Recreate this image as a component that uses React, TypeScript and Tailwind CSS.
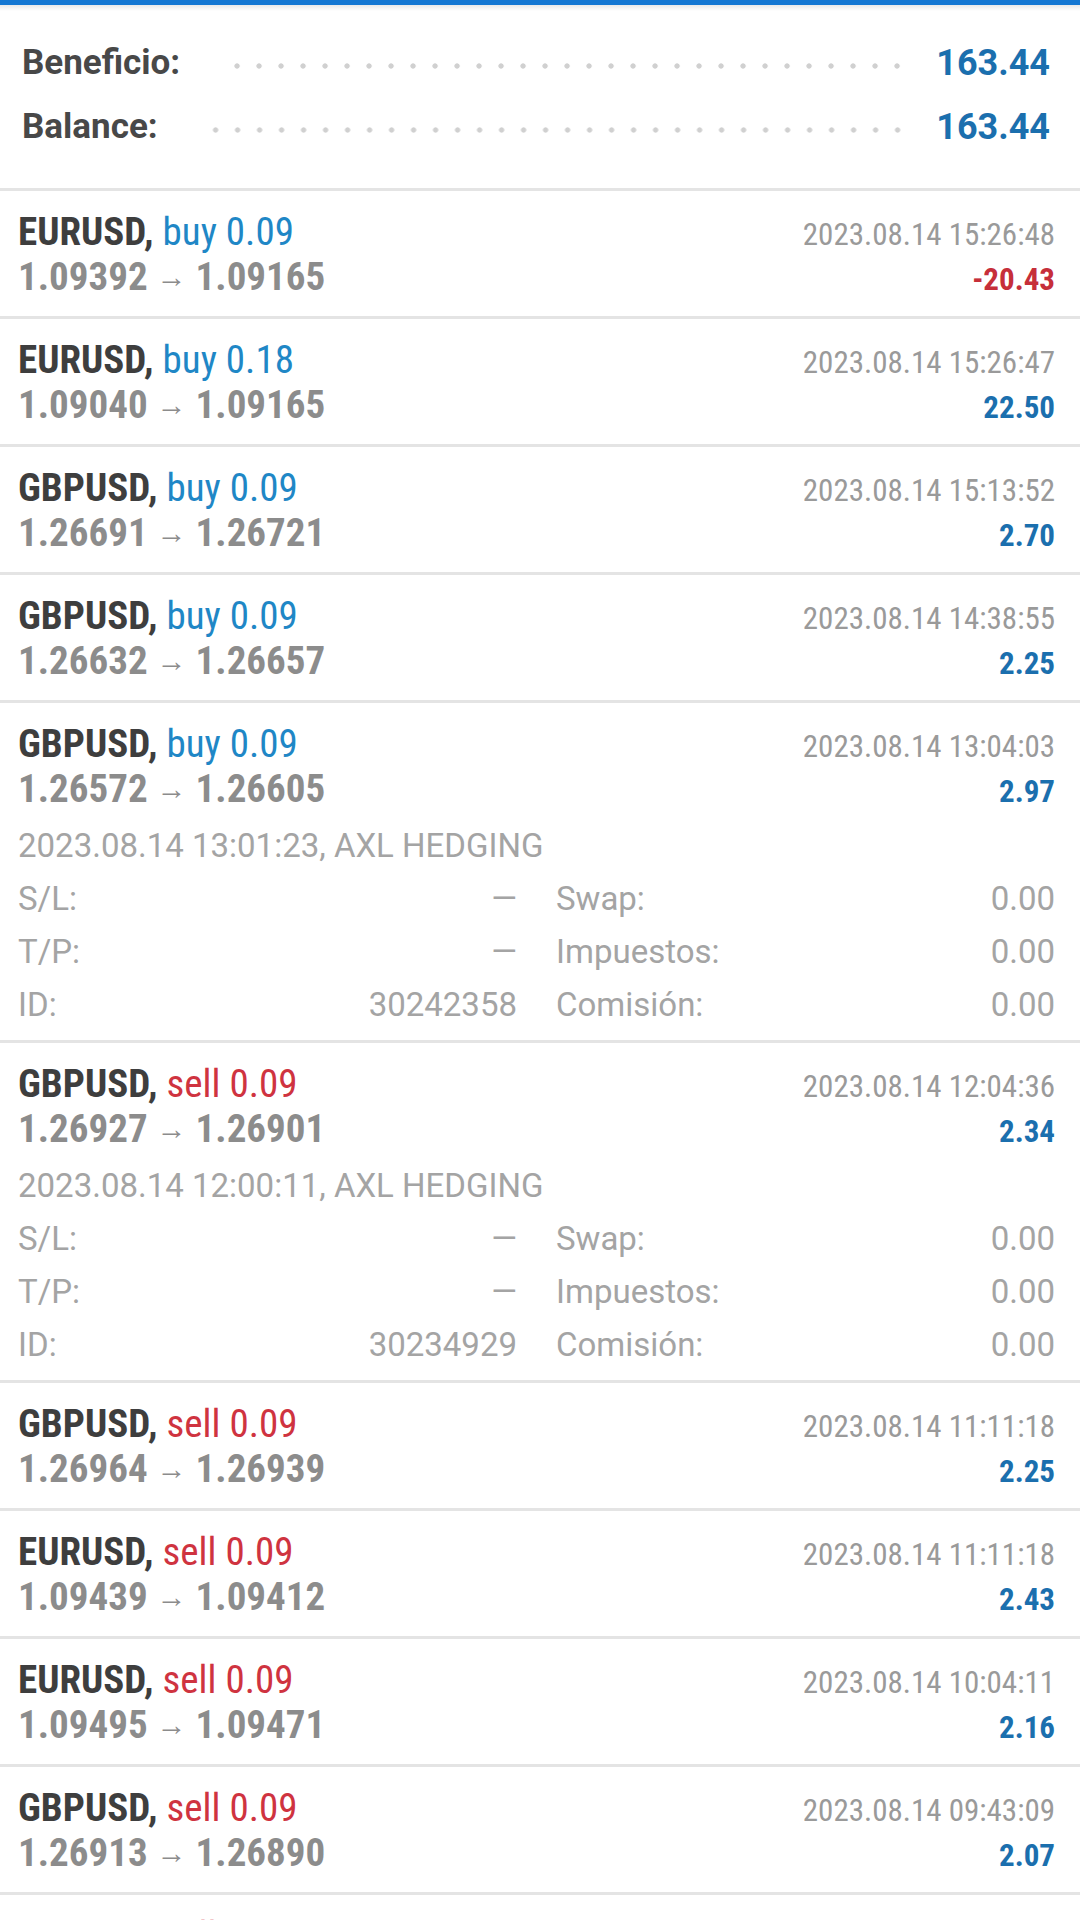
import React from "react"

type Trade = {
  sym: string
  side: "buy" | "sell"
  vol: string
  open: string
  close: string
  time: string
  profit: string
  details?: { opened: string; id: string }
}

const trades: Trade[] = [
  { sym: "EURUSD", side: "buy", vol: "0.09", open: "1.09392", close: "1.09165", time: "2023.08.14 15:26:48", profit: "-20.43" },
  { sym: "EURUSD", side: "buy", vol: "0.18", open: "1.09040", close: "1.09165", time: "2023.08.14 15:26:47", profit: "22.50" },
  { sym: "GBPUSD", side: "buy", vol: "0.09", open: "1.26691", close: "1.26721", time: "2023.08.14 15:13:52", profit: "2.70" },
  { sym: "GBPUSD", side: "buy", vol: "0.09", open: "1.26632", close: "1.26657", time: "2023.08.14 14:38:55", profit: "2.25" },
  {
    sym: "GBPUSD", side: "buy", vol: "0.09", open: "1.26572", close: "1.26605", time: "2023.08.14 13:04:03", profit: "2.97",
    details: { opened: "2023.08.14 13:01:23, AXL HEDGING", id: "30242358" },
  },
  {
    sym: "GBPUSD", side: "sell", vol: "0.09", open: "1.26927", close: "1.26901", time: "2023.08.14 12:04:36", profit: "2.34",
    details: { opened: "2023.08.14 12:00:11, AXL HEDGING", id: "30234929" },
  },
  { sym: "GBPUSD", side: "sell", vol: "0.09", open: "1.26964", close: "1.26939", time: "2023.08.14 11:11:18", profit: "2.25" },
  { sym: "EURUSD", side: "sell", vol: "0.09", open: "1.09439", close: "1.09412", time: "2023.08.14 11:11:18", profit: "2.43" },
  { sym: "EURUSD", side: "sell", vol: "0.09", open: "1.09495", close: "1.09471", time: "2023.08.14 10:04:11", profit: "2.16" },
  { sym: "GBPUSD", side: "sell", vol: "0.09", open: "1.26913", close: "1.26890", time: "2023.08.14 09:43:09", profit: "2.07" },
  { sym: "EURUSD", side: "sell", vol: "0.09", open: "1.09512", close: "1.09488", time: "2023.08.14 09:21:40", profit: "2.16" },
]

const SummaryRow = ({ label, value }: { label: string; value: string }) => (
  <div className="flex items-center h-[64px]">
    <span className="text-[35px] font-bold text-[#484848]">{label}</span>
    <div className="flex-1 h-[10px] ml-[46px] mr-[28px] mt-[6px] bg-[radial-gradient(circle,#d0d0d0_2.3px,transparent_3px)] bg-[length:22px_10px] bg-[position:right_center] bg-repeat-x" />
    <span className="text-[36px] font-bold text-[#1b6fae]">{value}</span>
  </div>
)

const DetailCell = ({ label, value }: { label: string; value: string }) => (
  <div className="flex justify-between h-[53px]">
    <span>{label}</span>
    <span>{value}</span>
  </div>
)

const TradeRow = ({ t }: { t: Trade }) => {
  const negative = t.profit.startsWith("-")
  return (
    <div className={`border-t-[3px] border-[#e4e4e4] pl-[18px] pr-[25px] pt-[19px] ${t.details ? "pb-[9px]" : "pb-[16px]"}`}>
      <div className="font-['Roboto_Condensed',Roboto,sans-serif] leading-[45px]">
        <div className="flex items-baseline justify-between h-[45px]">
          <span className="text-[39px] font-bold text-[#3e3e3e]">
            {t.sym},{" "}
            <span className={`font-normal ${t.side === "buy" ? "text-[#1f87c6]" : "text-[#cf3340]"}`}>
              {t.side} {t.vol}
            </span>
          </span>
          <span className="text-[31px] text-[#9a9a9a]">{t.time}</span>
        </div>
        <div className="flex items-baseline justify-between h-[45px]">
          <span className="text-[39px] font-bold text-[#8c8c8c]">
            {t.open} <span className="relative -top-[3px] text-[30px] font-normal leading-none">→</span> {t.close}
          </span>
          <span className={`text-[31px] font-bold ${negative ? "text-[#c62f3a]" : "text-[#1b6fae]"}`}>{t.profit}</span>
        </div>
      </div>
      {t.details && (
        <div className="mt-[7px] text-[33px] leading-[53px] text-[#a4a4a4]">
          <div className="h-[53px]">{t.details.opened}</div>
          <div className="grid grid-cols-2 gap-x-[39px]">
            <DetailCell label="S/L:" value="—" />
            <DetailCell label="Swap:" value="0.00" />
            <DetailCell label="T/P:" value="—" />
            <DetailCell label="Impuestos:" value="0.00" />
            <DetailCell label="ID:" value={t.details.id} />
            <DetailCell label="Comisión:" value="0.00" />
          </div>
        </div>
      )}
    </div>
  )
}

export default function App() {
  return (
    <div className="w-[1080px] h-[1920px] overflow-hidden bg-white font-['Roboto',sans-serif]">
      <div className="h-[5px] bg-[#1477d2]" />
      <div className="h-[6px] bg-gradient-to-b from-[#e8e8e8] to-white" />
      <div className="pl-[22px] pr-[30px] pt-[20px] pb-[29px]">
        <SummaryRow label="Beneficio:" value="163.44" />
        <SummaryRow label="Balance:" value="163.44" />
      </div>
      {trades.map((t, i) => (
        <TradeRow key={i} t={t} />
      ))}
    </div>
  )
}
